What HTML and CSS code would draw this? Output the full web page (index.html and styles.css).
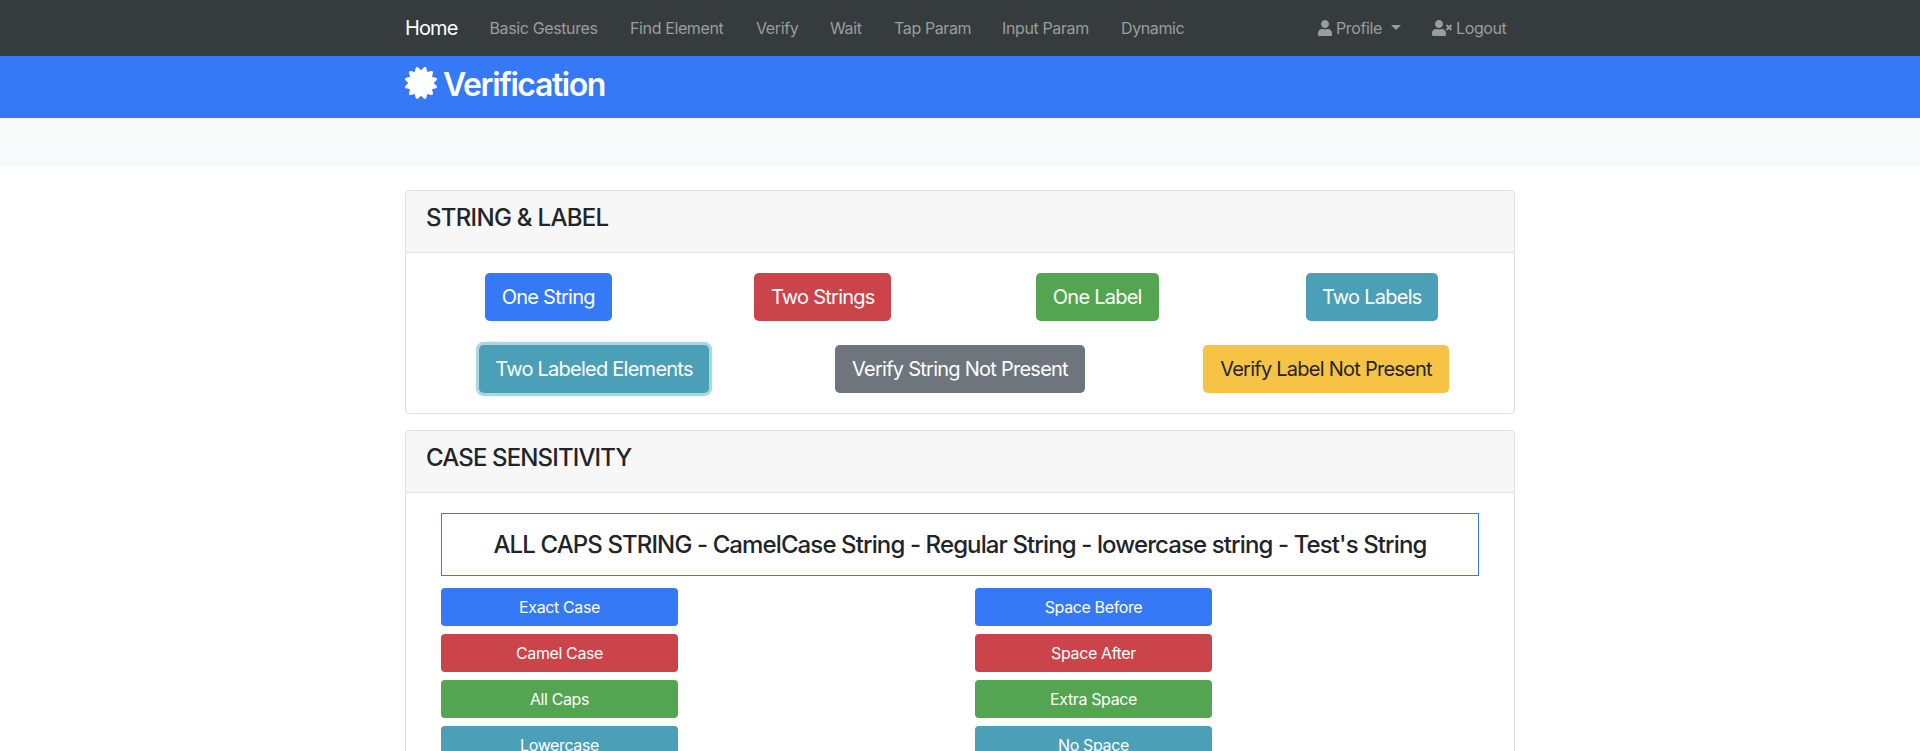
FILE: index.html
```html
<!DOCTYPE html>
<html lang="en">
<head>
<meta charset="utf-8">
<title>Verification</title>
<link rel="stylesheet" href="styles.css">
</head>
<body>
<nav class="navbar">
  <div class="container navbar-inner">
    <a class="brand">Home</a>
    <a class="nav-link w-basic">Basic Gestures</a>
    <a class="nav-link w-find">Find Element</a>
    <a class="nav-link w-verify">Verify</a>
    <a class="nav-link w-wait">Wait</a>
    <a class="nav-link w-tap">Tap Param</a>
    <a class="nav-link w-input">Input Param</a>
    <a class="nav-link w-dynamic">Dynamic</a>
    <a class="nav-link profile"><svg class="icon-user" viewBox="0 0 448 512"><path d="M224 256c70.7 0 128-57.3 128-128S294.7 0 224 0 96 57.3 96 128s57.3 128 128 128zm89.6 32h-16.7c-22.2 10.2-46.9 16-72.9 16s-50.6-5.8-72.9-16h-16.7C60.2 288 0 348.2 0 422.4V464c0 26.5 21.5 48 48 48h352c26.5 0 48-21.5 48-48v-41.6c0-74.2-60.2-134.4-134.4-134.4z"/></svg><span class="profile-label">Profile</span><span class="caret"></span></a>
    <a class="nav-link logout"><svg class="icon-user-times" viewBox="0 0 640 512"><path d="M589.6 240l45.6-45.6c6.3-6.3 6.3-16.5 0-22.8l-22.8-22.8c-6.3-6.3-16.5-6.3-22.8 0L544 194.4l-45.6-45.6c-6.3-6.3-16.5-6.3-22.8 0l-22.8 22.8c-6.3 6.3-6.3 16.5 0 22.8l45.6 45.6-45.6 45.6c-6.3 6.3-6.3 16.5 0 22.8l22.8 22.8c6.3 6.3 16.5 6.3 22.8 0l45.6-45.6 45.6 45.6c6.3 6.3 16.5 6.3 22.8 0l22.8-22.8c6.3-6.3 6.3-16.5 0-22.8L589.6 240zM224 256c70.7 0 128-57.3 128-128S294.7 0 224 0 96 57.3 96 128s57.3 128 128 128zm89.6 32h-16.7c-22.2 10.2-46.9 16-72.9 16s-50.6-5.8-72.9-16h-16.7C60.2 288 0 348.2 0 422.4V464c0 26.5 21.5 48 48 48h352c26.5 0 48-21.5 48-48v-41.6c0-74.2-60.2-134.4-134.4-134.4z"/></svg><span>Logout</span></a>
  </div>
</nav>
<header class="page-header">
  <div class="container">
    <h2 class="page-title"><svg class="icon-certificate" viewBox="0 0 512 512"><path d="M458.622 255.92l45.985-45.005c13.708-12.977 7.316-36.039-10.664-40.339l-62.65-15.99 17.661-62.015c4.991-17.838-11.829-34.663-29.661-29.671l-61.994 17.667-15.984-62.671C337.085.197 313.765-6.276 300.99 7.228L256 53.57 211.011 7.229c-12.63-13.351-36.047-7.234-40.325 10.668l-15.984 62.671-61.995-17.667C74.87 57.907 58.056 74.738 63.046 92.572l17.661 62.015-62.65 15.99C.069 174.878-6.31 197.944 7.392 210.915l45.985 45.005-45.985 45.004c-13.708 12.977-7.316 36.039 10.664 40.339l62.65 15.99-17.661 62.015c-4.991 17.838 11.829 34.663 29.661 29.671l61.994-17.667 15.984 62.671c4.439 18.575 27.696 24.018 40.325 10.668L256 458.61l44.989 46.001c12.5 13.488 35.987 7.486 40.325-10.668l15.984-62.671 61.994 17.667c17.836 4.994 34.651-11.837 29.661-29.671l-17.661-62.015 62.65-15.99c17.987-4.302 24.366-27.367 10.664-40.339l-45.984-45.004z"/></svg><span class="title-text">Verification</span></h2>
  </div>
</header>
<section class="spacer"></section>
<main class="container">
  <section class="card">
    <div class="card-header"><h4>STRING &amp; LABEL</h4></div>
    <div class="card-body">
      <div class="row row-4">
        <a class="btn btn-lg blue w-127">One String</a>
        <a class="btn btn-lg red w-137">Two Strings</a>
        <a class="btn btn-lg green w-123">One Label</a>
        <a class="btn btn-lg teal w-132">Two Labels</a>
      </div>
      <div class="row row-3">
        <a class="btn btn-lg teal focused w-230">Two Labeled Elements</a>
        <a class="btn btn-lg gray w-250">Verify String Not Present</a>
        <a class="btn btn-lg yellow w-246">Verify Label Not Present</a>
      </div>
    </div>
  </section>
  <section class="card">
    <div class="card-header"><h4 class="t-case">CASE SENSITIVITY</h4></div>
    <div class="card-body case-body">
      <h4 class="sample">ALL CAPS STRING - CamelCase String - Regular String - lowercase string - Test's String</h4>
      <div class="case-grid">
        <a class="btn blue">Exact Case</a><a class="btn blue">Space Before</a>
        <a class="btn red">Camel Case</a><a class="btn red">Space After</a>
        <a class="btn green">All Caps</a><a class="btn green">Extra Space</a>
        <a class="btn teal">Lowercase</a><a class="btn teal">No Space</a>
      </div>
    </div>
  </section>
</main>
</body>
</html>
```

FILE: styles.css
```css
* { box-sizing: border-box; }
html, body { height: 100%; }
body {
  margin: 0;
  overflow: hidden;
  background: #fff;
  color: #212529;
  font: 400 16px/1.5 Inter, "Liberation Sans", sans-serif;
  letter-spacing: -0.38px;
}
h2, h4 { margin: 0 0 8px; font-weight: 500; line-height: 1.2; }
h4 { font-size: 24px; letter-spacing: -0.7px; }
svg { fill: currentColor; flex: none; display: block; }
.container { width: 1110px; margin: 0 auto; }

.navbar { height: 56px; background: #363b3e; }
.navbar-inner { display: flex; align-items: center; height: 56px; white-space: nowrap; }
.brand { width: 84.5px; color: #fff; font-size: 20px; letter-spacing: -0.9px; }
.nav-link { display: flex; align-items: center; color: #9a9d9e; }
.w-basic { width: 140.5px; }
.w-find { width: 126px; }
.w-verify { width: 74px; }
.w-wait { width: 64px; }
.w-tap { width: 108px; }
.w-input { width: 119px; }
.profile { margin-left: auto; width: 114px; }
.logout { width: 83px; gap: 4px; }
.icon-user { width: 14px; height: 16px; }
.icon-user-times { width: 20px; height: 16px; }
.profile-label { width: 55px; margin-left: 4px; }
.caret { border: 5px solid transparent; border-top-color: currentColor; border-bottom: 0; margin-top: -2px; }

.page-header { height: 62.4px; padding-top: 8px; background: #3679f7; color: #fff; }
.page-title { display: flex; align-items: center; gap: 6px; font-size: 32px; font-weight: 600; letter-spacing: -1.4px; }
.title-text { padding-top: 2px; margin-bottom: -2px; }
.icon-certificate { width: 32px; height: 32px; }
.spacer { height: 48px; margin-bottom: 24px; background: #f8f9fb; }

.card { margin-bottom: 16px; border: 1px solid #dfdfdf; border-radius: 4px; overflow: hidden; background: #fff; }
.card-header { padding: 13px 20px 11px; background: #f7f7f7; border-bottom: 1px solid #dfdfdf; }
.t-case { letter-spacing: -0.86px; }
.card-body { padding: 20px; }
.row { display: grid; justify-items: center; margin: 0 -15px; }
.row-4 { grid-template-columns: repeat(4, 1fr); margin-bottom: 24px; }
.row-3 { grid-template-columns: repeat(3, 1fr); }

.btn {
  display: flex;
  align-items: center;
  justify-content: center;
  height: 38px;
  border-radius: 4px;
  color: #fff;
  white-space: nowrap;
}
.btn-lg { height: 48px; border-radius: 4.8px; font-size: 20px; letter-spacing: -0.75px; }
.w-127 { width: 127px; }
.w-137 { width: 137px; }
.w-123 { width: 123px; }
.w-132 { width: 132px; }
.w-230 { width: 230px; }
.w-250 { width: 250px; }
.w-246 { width: 246px; }
.blue { background: #3679f7; }
.red { background: #cb444a; }
.green { background: #54a551; }
.teal { background: #4b9fb6; }
.gray { background: #6e757c; }
.yellow { background: #f6c344; color: #212529; }
.focused { box-shadow: 0 0 0 3.2px #acd6e0; }

.case-body { padding: 20px 35px; }
.sample { height: 62.8px; margin-bottom: 12px; padding: 17px 0 15px; border: 1px solid #3679f7; text-align: center; white-space: nowrap; letter-spacing: -0.89px; }
.case-grid { display: grid; grid-template-columns: 237px 237px; column-gap: 297px; row-gap: 8px; }
```
